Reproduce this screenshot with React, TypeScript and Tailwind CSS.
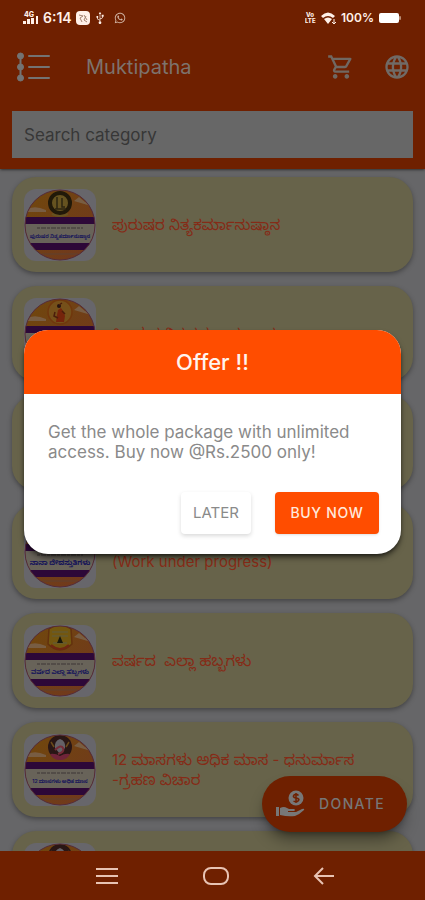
import { useState } from "react";
import { MdLanguage, MdOutlineShoppingCart } from "react-icons/md";
import { FaUsb, FaWhatsapp } from "react-icons/fa";

const categories = [
  { id: 1, title: "ಪುರುಷರ ನಿತ್ಯಕರ್ಮಾನುಷ್ಠಾನ", badge: "ಪುರುಷರ ನಿತ್ಯಕರ್ಮಾನುಷ್ಠಾನ", badgeSize: 5, emblem: "ring" },
  { id: 2, title: "ಸ್ತ್ರೀಯರ ನಿತ್ಯಕರ್ಮಾನುಷ್ಠಾನ", badge: "ಸ್ತ್ರೀಯರ ನಿತ್ಯಕರ್ಮ", badgeSize: 6, emblem: "figure" },
  { id: 3, title: "", badge: "", badgeSize: 7, emblem: "ring" },
  { id: 4, title: "ನಾನಾ ದೇವಸ್ತುತಿಗಳು\n(Work under progress)", badge: "ನಾನಾ ದೇವಸ್ತುತಿಗಳು", badgeSize: 7, emblem: "figure" },
  { id: 5, title: "ವರ್ಷದ  ಎಲ್ಲಾ ಹಬ್ಬಗಳು", badge: "ವರ್ಷದ ಎಲ್ಲಾ ಹಬ್ಬಗಳು", badgeSize: 6, emblem: "shrine" },
  { id: 6, title: "12 ಮಾಸಗಳು ಅಧಿಕ ಮಾಸ - ಧನುರ್ಮಾಸ -ಗ್ರಹಣ ವಿಚಾರ", badge: "12 ಮಾಸಗಳು ಅಧಿಕ ಮಾಸ", badgeSize: 5, emblem: "lotus" },
  { id: 7, title: "", badge: "", badgeSize: 6, emblem: "lotus" },
];

function Emblem({ kind }: { kind: string }) {
  if (kind === "figure") {
    return (
      <g>
        <circle cx="36" cy="14" r="12" fill="#75501a" stroke="#70370d" strokeWidth="1.5" />
        <path d="M34 12l3-2 2 3 2 5-1 6h-8l1-7z" fill="#75240b" />
        <circle cx="35" cy="8" r="2" fill="#251410" />
        <path d="M35 7l3-2M31 14l-1 4 4 2M38 13l3 3" stroke="#4b1d0b" strokeWidth="1.5" fill="none" />
      </g>
    );
  }
  if (kind === "shrine") {
    return (
      <g>
        <path d="M25 4q11-8 22 0l1 15q-12 12-24 0z" fill="#735710" stroke="#63310e" strokeWidth="1.5" />
        <path d="M28 7h16M28 11h16M29 18h14" stroke="#665b30" strokeWidth="1.5" />
        <path d="M36 11l3 7h-6z" fill="#17180c" />
        <path d="M27 20q9 8 18 0" stroke="#702712" strokeWidth="2" fill="none" />
      </g>
    );
  }
  if (kind === "lotus") {
    return (
      <g>
        <circle cx="36" cy="13" r="12" fill="#291615" />
        <path d="M36 5q-6 2-5 9l5 6 5-6q1-7-5-9z" fill="#646167" />
        <path d="M31 16q6-6 8-2t-5 6" stroke="#762b38" strokeWidth="2" fill="none" />
        <path d="M26 20q5-1 10 2 5-3 10-2-3 6-10 6t-10-6z" fill="#702439" />
        <path d="M27 8l3 5M45 8l-3 5" stroke="#6b4a1a" strokeWidth="1.5" />
      </g>
    );
  }
  return (
    <g>
      <circle cx="36" cy="14" r="10" fill="#665320" stroke="#211909" strokeWidth="4" />
      <path d="M33 8v12M38 9v9h3M31 20h11" stroke="#2c2510" strokeWidth="1.5" fill="none" />
      <path d="M28 25q8 4 16 0" stroke="#665320" strokeWidth="2" fill="none" />
    </g>
  );
}

type ThumbnailProps = { id: number; badge: string; badgeSize: number; emblem: string };

function Thumbnail({ id, badge, badgeSize, emblem }: ThumbnailProps) {
  return (
    <div className="flex h-[72px] w-[72px] shrink-0 rounded-xl bg-[#67666b]">
      <svg viewBox="0 0 72 72" className="h-full w-full">
        <defs>
          <clipPath id={`disc-${id}`}>
            <circle cx="36" cy="36" r="35" />
          </clipPath>
          <linearGradient id={`sky-${id}`} x1="0" x2="1" y1="0" y2="1">
            <stop offset="0" stopColor="#70480b" />
            <stop offset="1" stopColor="#713620" />
          </linearGradient>
        </defs>
        <g clipPath={`url(#disc-${id})`}>
          <rect width="72" height="72" fill={`url(#sky-${id})`} />
          <path d="M4 20q7-4 18 1v2H4zM50 12l5-4 6 5 6 2v2z" fill="#785d43" />
          <rect y="28" width="72" height="8" fill="#2d0838" />
          <rect y="35" width="72" height="20" fill="#686359" />
          <rect y="54" width="72" height="7" fill="#2d0838" />
          <path d="M18 65h36" stroke="#5f4030" strokeWidth="1" />
          <path d="M13 39h46" stroke="#3c3636" strokeWidth="1" strokeDasharray="3 1 5 1" />
          <text x="36" y="49" textAnchor="middle" fontSize={badgeSize} fontWeight="700" fill="#16145a">
            {badge}
          </text>
          <Emblem kind={emblem} />
        </g>
        <circle cx="36" cy="36" r="35" fill="none" stroke="#552b38" strokeWidth="1" />
      </svg>
    </div>
  );
}

function StatusBar() {
  return (
    <div className="flex h-[35px] items-center justify-between px-[23px] text-[#fff0e8]">
      <div className="flex items-center gap-1">
        <svg viewBox="0 0 16 14" className="h-[14px] w-4" fill="currentColor">
          <text x="1" y="6" fontSize="7" fontWeight="800">4G</text>
          <path d="M0 10h3v3H0zM4 8h3v5H4zM8 7h3v6H8zM13 5h2v8h-2z" />
        </svg>
        <span className="text-sm font-semibold">6:14</span>
        <svg viewBox="0 0 14 14" className="h-[14px] w-[14px]">
          <rect width="14" height="14" rx="4" fill="#fff0e8" />
          <path d="M3 4l4 1-3 2 2 4M8 4l3 5M10 5L8 9l3 2" stroke="#a48370" fill="none" />
        </svg>
        <FaUsb className="h-3 w-3 -rotate-90" />
        <FaWhatsapp className="ml-1 h-3 w-3 text-[#d2b5a4]" />
      </div>
      <div className="flex items-center gap-1">
        <svg viewBox="0 0 12 12" className="h-3 w-3" fill="currentColor">
          <text x="1" y="5" fontSize="6" fontWeight="800">Vo</text>
          <text x="0" y="11" fontSize="6" fontWeight="800">LTE</text>
        </svg>
        <svg viewBox="0 0 16 14" className="h-[14px] w-4" fill="currentColor">
          <path d="M0 5q7-7 14 0l-2 2q-5-4-10 0zM3 8q4-3 8 0l-4 5z" />
          <path d="M13 8v5M11 11l2 2 2-2" stroke="currentColor" fill="none" />
        </svg>
        <span className="text-xs font-semibold">100%</span>
        <svg viewBox="0 0 24 12" className="h-3 w-6">
          <rect x="1" y="1" width="20" height="10" rx="2" fill="#fff" />
          <rect x="21" y="4" width="2" height="4" rx="1" fill="#b98c74" />
        </svg>
      </div>
    </div>
  );
}

function OfferDialog({ onClose }: { onClose: () => void }) {
  return (
    <div className="absolute inset-0 flex items-center px-6 pb-4">
      <div
        role="dialog"
        aria-labelledby="offer-title"
        className="w-full overflow-hidden rounded-3xl bg-white shadow-md shadow-black/60"
      >
        <h2
          id="offer-title"
          className="flex h-16 items-center justify-center bg-[#ff4d00] text-[22px] font-medium text-[#fff4ee]"
        >
          Offer !!
        </h2>
        <div className="pt-7 pr-[22px] pb-5 pl-6">
          <p className="text-[17px] leading-5 text-[#8a8a8a]">
            Get the whole package with unlimited access. Buy now @Rs.2500 only!
          </p>
          <div className="mt-[30px] flex justify-end gap-6">
            <button
              onClick={onClose}
              className="h-[42px] w-[70px] rounded-sm bg-white text-[15px] text-[#8a8a8a] shadow-[0_2px_4px_rgba(0,0,0,0.15)]"
            >
              LATER
            </button>
            <button className="h-[42px] w-[104px] rounded bg-[#ff4d00] text-sm font-medium tracking-wider text-[#ffe9dd] shadow-sm">
              BUY NOW
            </button>
          </div>
        </div>
      </div>
    </div>
  );
}

export default function App() {
  const [offerOpen, setOfferOpen] = useState(true);

  return (
    <div className="relative flex h-screen flex-col overflow-hidden bg-[#666668] font-['Inter','Noto_Sans_Kannada','Noto_Sans',sans-serif]">
      <header className="z-0 shrink-0 bg-[#6f2000] pb-[11px] shadow-sm shadow-black/40">
        <StatusBar />
        <div className="flex h-[76px] items-center pr-[14px] pb-3 pl-4">
          <button aria-label="Menu">
            <svg viewBox="0 0 34 30" className="h-[30px] w-[34px]" fill="#737373" stroke="#737373">
              <path d="M4.500 4v22" strokeWidth="2" />
              <circle cx="4.500" cy="4" r="3" />
              <circle cx="4.500" cy="15" r="3" />
              <circle cx="4.500" cy="26" r="3" />
              <path d="M13 4h20M13 15h20M13 26h20" strokeWidth="2" strokeLinecap="round" />
            </svg>
          </button>
          <h1 className="ml-9 flex-1 text-xl text-[#7d736d]">Muktipatha</h1>
          <button aria-label="Cart">
            <MdOutlineShoppingCart className="h-7 w-7 text-[#706862]" />
          </button>
          <button aria-label="Language" className="ml-7">
            <MdLanguage className="h-7 w-7 text-[#706a66]" />
          </button>
        </div>
        <input
          type="text"
          aria-label="Search category"
          placeholder="Search category"
          className="mx-3 block h-[47px] w-[calc(100%-1.5rem)] bg-[#676767] px-3 text-[17px] text-[#333] placeholder:text-[#373737]"
        />
      </header>

      <main className="flex min-h-0 flex-1 flex-col gap-[14px] overflow-hidden px-3 pt-2">
        {categories.map((c) => (
          <a
            key={c.id}
            href={`#category-${c.id}`}
            className="flex h-[95px] shrink-0 items-center rounded-3xl bg-[#67634a] pr-10 pl-3 shadow-[0_2px_5px_rgba(0,0,0,0.35)]"
          >
            <Thumbnail id={c.id} badge={c.badge} badgeSize={c.badgeSize} emblem={c.emblem} />
            <span className="ml-4 text-[15px] leading-5 whitespace-pre-wrap text-[#852b17]">{c.title}</span>
          </a>
        ))}
      </main>

      <button className="absolute right-[18px] bottom-[68px] flex h-14 w-[145px] items-center rounded-full bg-[#6f2000] pl-[14px] text-[#777] shadow-lg shadow-black/40">
        <svg viewBox="0 0 29 28" className="h-7 w-[29px]" fill="#777">
          <circle cx="20" cy="8" r="7.500" />
          <path
            d="M22.500 5.500q-2-2-4.500-.5-2 2 2 3t2.500 2.500q-2 2.500-5 .5M20 3v10"
            stroke="#6f2000"
            strokeWidth="1.500"
            fill="none"
          />
          <path d="M0 17h3v9H0z" />
          <path d="M4 18q4-2 7 0l2 1h5q2 1 0 2h-6v1h8l6-3q3-1 2 1-4 4-9 6-7 1-15-1z" />
        </svg>
        <span className="ml-[14px] text-sm font-medium tracking-widest">DONATE</span>
      </button>

      <nav className="z-0 flex h-[49px] shrink-0 items-center justify-between bg-[#6f2000] pr-[90px] pl-24">
        <button aria-label="Recent apps">
          <svg viewBox="0 0 22 20" className="h-5 w-[22px]" stroke="#e8c3b3" strokeWidth="2" fill="none">
            <path d="M0 3h22M0 10h22M0 17h22" />
          </svg>
        </button>
        <button aria-label="Home">
          <svg viewBox="0 0 26 20" className="h-5 w-[26px]" stroke="#e8c3b3" strokeWidth="2" fill="none">
            <rect x="1" y="2" width="24" height="16" rx="7" />
          </svg>
        </button>
        <button aria-label="Back">
          <svg viewBox="0 0 22 20" className="h-5 w-[22px]" stroke="#e8c3b3" strokeWidth="2" fill="none">
            <path d="M21 10H2M10 2l-8 8 8 8" />
          </svg>
        </button>
      </nav>

      {offerOpen && <OfferDialog onClose={() => setOfferOpen(false)} />}
    </div>
  );
}
